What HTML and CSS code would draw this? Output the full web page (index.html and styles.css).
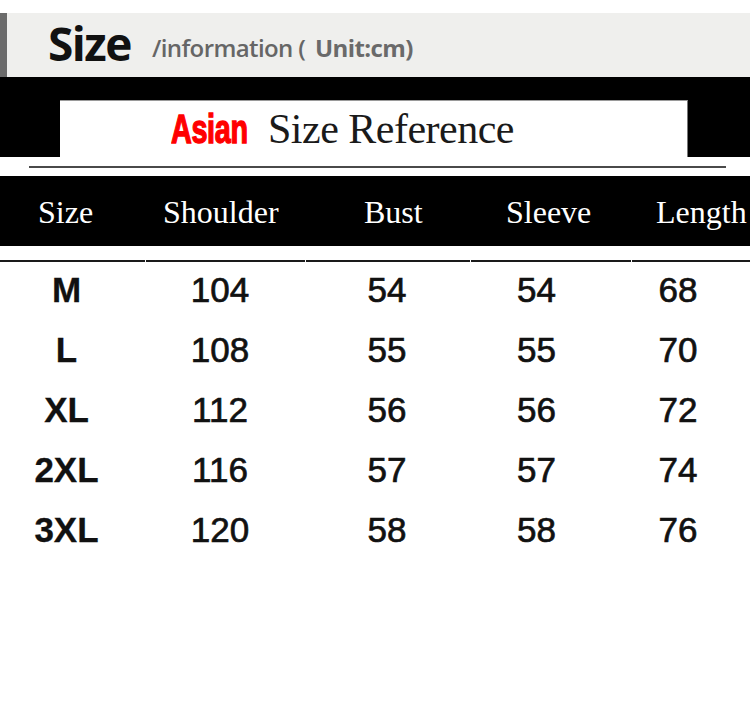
FILE: index.html
```html
<!DOCTYPE html>
<html lang="en">
<head>
<meta charset="utf-8">
<title>Size information</title>
<link rel="stylesheet" href="styles.css">
</head>
<body>
<div class="page">
  <div class="title-band">
    <span class="title-main">Size</span><span class="title-sub">/information ( <b>Unit:cm)</b></span>
  </div>

  <div class="banner">
    <div class="banner-box">
      <span class="asian"><span class="asian-text">Asian</span></span><span class="ref">Size Reference</span>
    </div>
  </div>
  <div class="strip"><div class="strip-rule"></div></div>

  <div class="head-row">
    <span>Size</span><span>Shoulder</span><span>Bust</span><span>Sleeve</span><span>Length</span>
  </div>

  <div class="rule-row">
    <i class="seg s1"></i><i class="seg s2"></i><i class="seg s3"></i><i class="seg s4"></i><i class="seg s5"></i>
  </div>

  <div class="data">
    <div class="cell label">M</div><div class="cell">104</div><div class="cell">54</div><div class="cell">54</div><div class="cell">68</div>
    <div class="cell label">L</div><div class="cell">108</div><div class="cell">55</div><div class="cell">55</div><div class="cell">70</div>
    <div class="cell label">XL</div><div class="cell">112</div><div class="cell">56</div><div class="cell">56</div><div class="cell">72</div>
    <div class="cell label">2XL</div><div class="cell">116</div><div class="cell">57</div><div class="cell">57</div><div class="cell">74</div>
    <div class="cell label">3XL</div><div class="cell">120</div><div class="cell">58</div><div class="cell">58</div><div class="cell">76</div>
  </div>
</div>
</body>
</html>
```

FILE: styles.css
```css
html, body {
  margin: 0;
  padding: 0;
  background: #ffffff;
}

.page {
  width: 750px;
  height: 707px;
  overflow: hidden;
  padding-top: 13px;
  box-sizing: border-box;
}

.title-band {
  height: 64px;
  background: #efefed;
  border-left: 7px solid #6b6b6b;
  padding-left: 41px;
  font-family: "Open Sans", "Liberation Sans", sans-serif;
  line-height: 60px;
  white-space: nowrap;
  box-sizing: border-box;
}

.title-main {
  font-size: 46px;
  font-weight: 700;
  color: #111;
  letter-spacing: -1.5px;
}

.title-sub {
  margin-left: 21px;
  font-size: 24px;
  font-weight: 600;
  color: #666;
  vertical-align: 4px;
  letter-spacing: -0.6px;
}

.title-sub b {
  font-weight: 700;
  color: #6a6a6a;
  margin-left: 4px;
  font-size: 24px;
}

.banner {
  background: #000;
  padding: 23px 62px 0 60px;
}

.banner-box {
  height: 57px;
  background: #fff;
  border-top: 1px solid #9a9a9a;
  border-right: 1px solid #777;
  box-sizing: border-box;
  padding-left: 111px;
  line-height: 56px;
  white-space: nowrap;
}

.asian {
  display: inline-block;
  width: 79px;
  margin-right: 18px;
  font-family: "Liberation Sans", Arial, sans-serif;
  font-weight: 700;
  font-size: 40px;
  color: #ff0000;
}

.asian-text {
  display: inline-block;
  transform: scaleX(0.72);
  transform-origin: left center;
  letter-spacing: -0.5px;
  -webkit-text-stroke: 1.4px #ff0000;
}

.ref {
  font-family: "Liberation Serif", "Times New Roman", serif;
  font-size: 42px;
  color: #1a1a1a;
  letter-spacing: -0.5px;
}

.strip {
  height: 19px;
  background: #fff;
  padding: 9px 24px 0 29px;
  box-sizing: border-box;
}

.strip-rule {
  height: 2px;
  background: #4a4a4a;
}

.head-row {
  height: 70px;
  background: #000;
  color: #fff;
  display: grid;
  grid-template-columns: 125px 201px 142px 150px 94px;
  padding-left: 38px;
  font-family: "Liberation Serif", "Times New Roman", serif;
  font-size: 32px;
  line-height: 72px;
  white-space: nowrap;
  overflow: hidden;
}

.rule-row {
  display: flex;
  gap: 1px;
  margin-top: 14px;
  height: 2px;
}

.seg {
  display: block;
  height: 2px;
  background: #1a1a1a;
}

.s1 { width: 145px; }
.s2 { width: 159px; }
.s3 { width: 164px; }
.s4 { width: 160px; }
.s5 { flex: 1; }

.data {
  display: grid;
  grid-template-columns: 133px 174px 160px 139px 144px;
  grid-auto-rows: 60px;
  margin-top: -2px;
  font-family: "Liberation Sans", Arial, sans-serif;
  font-size: 35px;
  line-height: 60px;
  color: #111;
}

.cell {
  text-align: center;
  -webkit-text-stroke: 0.7px #111;
}

.cell.label {
  font-weight: 700;
  -webkit-text-stroke: 0.3px #111;
}
```
